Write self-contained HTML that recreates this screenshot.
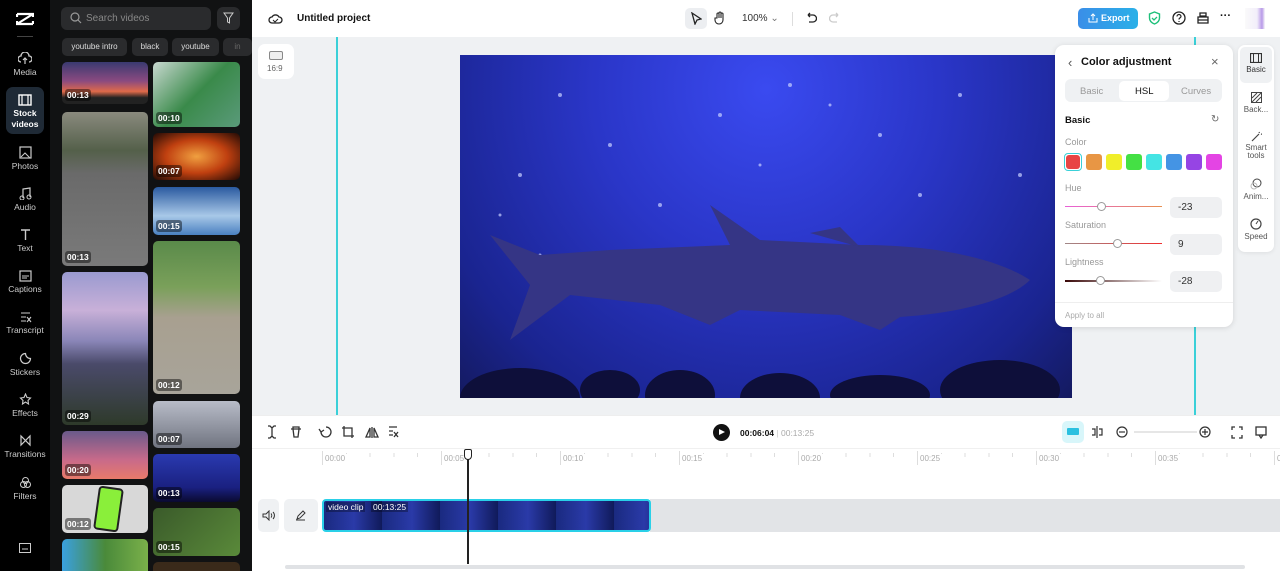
<!DOCTYPE html>
<html><head><meta charset="utf-8"><style>
*{box-sizing:border-box;margin:0;padding:0}
html{width:1280px;height:571px;overflow:hidden}
body{width:1280px;height:571px;overflow:hidden;font-family:"Liberation Sans",sans-serif;background:#fff;position:relative;font-size:12px;color:#111}
.a{position:absolute}
.nav{left:0;top:0;width:50px;height:571px;background:#000}
.ni{position:absolute;left:0;width:50px;text-align:center;color:#ccc;font-size:8.5px}
.ni svg{display:block;margin:0 auto 2px}
.panel{left:50px;top:0;width:202px;height:571px;background:#111213}
.th{position:absolute;border-radius:5px;overflow:hidden}
.th span{position:absolute;left:3px;bottom:3px;background:rgba(0,0,0,.45);color:#fff;font-size:8.5px;font-weight:bold;padding:1px 2px;border-radius:3px}
.chip{position:absolute;top:38px;height:18px;background:#2a2b2d;border-radius:5px;color:#ddd;font-size:8px;line-height:18px;text-align:center}
.lbl{color:#999;font-size:9px}
.inp{position:absolute;left:1170px;width:52px;height:21px;background:#eff0f2;border-radius:5px;font-size:10px;line-height:21px;padding-left:8px;color:#333}
.tick{position:absolute;top:454px;font-size:8px;color:#aaa;background:#fff;padding:0 2px}
.tl{position:absolute;top:451px;width:1px;height:14px;background:#ddd}
</style></head><body>
<div class="a nav">
<svg class="a" style="left:16px;top:12px" width="18" height="14" viewBox="0 0 18 14"><path d="M1 2h16L1 12h16" stroke="#fff" stroke-width="2.2" fill="none"/><path d="M1 2v3M17 2v3M1 12V9M17 12V9" stroke="#fff" stroke-width="2.2"/></svg>
<div class="a" style="left:17px;top:36px;width:16px;height:1px;background:#444"></div>
<div class="ni" style="top:52px"><svg width="14" height="13"><path d="M3 10a3 3 0 010-6 4 4 0 018 0 3 3 0 010 6" stroke="#ccc" fill="none" stroke-width="1.3"/><path d="M7 6v6M5 8l2-2 2 2" stroke="#ccc" fill="none" stroke-width="1.2"/></svg>Media</div>
<div class="a" style="left:6px;top:87px;width:38px;height:47px;background:#1f2a36;border-radius:7px"></div>
<div class="ni" style="top:94px;color:#fff;font-weight:bold;line-height:11px"><svg width="14" height="12"><rect x="1" y="1" width="12" height="10" stroke="#fff" fill="none" stroke-width="1.4"/><path d="M4 1v10M10 1v10" stroke="#fff" stroke-width="1.2"/></svg>Stock<br>videos</div>
<div class="ni" style="top:146px"><svg width="13" height="13"><rect x="1" y="1" width="11" height="11" stroke="#ccc" fill="none" stroke-width="1.2"/><path d="M2 11l4-4 5 5" stroke="#ccc" fill="none"/></svg>Photos</div>
<div class="ni" style="top:187px"><svg width="13" height="13"><path d="M4 11V2l7-1v9" stroke="#ccc" fill="none" stroke-width="1.2"/><circle cx="3" cy="11" r="2" stroke="#ccc" fill="none"/><circle cx="10" cy="10" r="2" stroke="#ccc" fill="none"/></svg>Audio</div>
<div class="ni" style="top:228px"><svg width="13" height="13"><path d="M2 2h9M6.5 2v10" stroke="#ccc" stroke-width="1.4"/></svg>Text</div>
<div class="ni" style="top:270px"><svg width="13" height="12"><rect x="1" y="1" width="11" height="10" stroke="#ccc" fill="none" stroke-width="1.2"/><path d="M3 6h7M3 8h5" stroke="#ccc"/></svg>Captions</div>
<div class="ni" style="top:311px"><svg width="13" height="12"><path d="M2 2h9M2 6h5M2 10h5M8 6l4 5M12 6l-4 5" stroke="#ccc" stroke-width="1.1"/></svg>Transcript</div>
<div class="ni" style="top:352px"><svg width="13" height="13"><path d="M6.5 1.5a5 5 0 105 5 5 5 0 01-5-5z" stroke="#ccc" fill="none" stroke-width="1.2"/></svg>Stickers</div>
<div class="ni" style="top:393px"><svg width="13" height="13"><path d="M6.5 1l1.5 3.5 3.5.5-2.5 2.5.5 3.5-3-2-3 2 .5-3.5L1.5 5 5 4.5z" stroke="#ccc" fill="none" stroke-width="1.1"/></svg>Effects</div>
<div class="ni" style="top:434px"><svg width="13" height="13"><path d="M2 2v9l9-9v9z" stroke="#ccc" fill="none" stroke-width="1.2"/></svg>Transitions</div>
<div class="ni" style="top:476px"><svg width="13" height="13"><circle cx="6.5" cy="4.5" r="3" stroke="#ccc" fill="none"/><circle cx="4.5" cy="8.5" r="3" stroke="#ccc" fill="none"/><circle cx="8.5" cy="8.5" r="3" stroke="#ccc" fill="none"/></svg>Filters</div>
<svg class="a" style="left:19px;top:543px" width="12" height="10"><rect x=".5" y=".5" width="11" height="9" stroke="#ccc" fill="none"/><path d="M3 6h6" stroke="#ccc"/></svg>
</div>
<div class="a panel">
<div class="a" style="left:11px;top:7px;width:150px;height:23px;background:#2a2b2d;border-radius:6px"></div>
<svg class="a" style="left:20px;top:12px" width="12" height="12"><circle cx="5" cy="5" r="4" stroke="#999" fill="none" stroke-width="1.2"/><path d="M8 8l3 3" stroke="#999" stroke-width="1.2"/></svg>
<div class="a" style="left:36px;top:13px;color:#888;font-size:10px">Search videos</div>
<div class="a" style="left:167px;top:7px;width:23px;height:23px;background:#2a2b2d;border-radius:6px"></div>
<svg class="a" style="left:173px;top:12px" width="11" height="12"><path d="M1 1h9L6.5 6v5L4.5 10V6z" stroke="#ccc" fill="none"/></svg>
<div class="chip" style="left:12px;width:65px">youtube intro</div>
<div class="chip" style="left:82px;width:36px">black</div>
<div class="chip" style="left:122px;width:47px">youtube</div>
<div class="chip" style="left:173px;width:29px;color:#666">in</div>
<div class="th" style="left:12px;top:62px;width:86px;height:42px;background:linear-gradient(#3a3a70,#8a4a80 45%,#e06a4a 70%,#222 85%)"><span>00:13</span></div>
<div class="th" style="left:12px;top:112px;width:86px;height:154px;background:linear-gradient(#8a8a7e,#54604a 25%,#6a6a6a 40%,#7a7a7a)"><span>00:13</span></div>
<div class="th" style="left:12px;top:272px;width:86px;height:153px;background:linear-gradient(#9a9ad0,#c8b0d8 25%,#8a86b8 45%,#4a4a6a 60%,#2e3a2a)"><span>00:29</span></div>
<div class="th" style="left:12px;top:431px;width:86px;height:48px;background:linear-gradient(#6a5a8a,#c86a8a 60%,#e87a6a)"><span>00:20</span></div>
<div class="th" style="left:12px;top:485px;width:86px;height:48px;background:#d8d8d8"><div class="a" style="left:34px;top:2px;width:25px;height:44px;background:#8aef3a;border:2px solid #222;border-radius:4px;transform:rotate(8deg)"></div><span>00:12</span></div>
<div class="th" style="left:12px;top:539px;width:86px;height:40px;background:linear-gradient(90deg,#3aa0e0,#4a8a3a,#7ab04a)"></div>
<div class="th" style="left:103px;top:62px;width:87px;height:65px;background:linear-gradient(135deg,#c8d8d0,#3a8a4a 50%,#5a9a7a)"><span>00:10</span></div>
<div class="th" style="left:103px;top:133px;width:87px;height:47px;background:radial-gradient(#f0a040,#c04010 50%,#200a05)"><span>00:07</span></div>
<div class="th" style="left:103px;top:187px;width:87px;height:48px;background:linear-gradient(#2a5aa0,#a8c8e8 60%,#4a80c0)"><span>00:15</span></div>
<div class="th" style="left:103px;top:241px;width:87px;height:153px;background:linear-gradient(#5a8a4a,#7aa05a 30%,#a8a090 50%,#a8a49a)"><span>00:12</span></div>
<div class="th" style="left:103px;top:401px;width:87px;height:47px;background:linear-gradient(#b8bcc8,#707480)"><span>00:07</span></div>
<div class="th" style="left:103px;top:454px;width:87px;height:48px;background:linear-gradient(#2a3ab0,#1a2080 70%,#0a0a30)"><span>00:13</span></div>
<div class="th" style="left:103px;top:508px;width:87px;height:48px;background:linear-gradient(135deg,#3a5a2a,#5a8a3a)"><span>00:15</span></div>
<div class="th" style="left:103px;top:562px;width:87px;height:20px;background:#3a2a1a"></div>
</div>
<div class="a" style="left:252px;top:278px;width:6px;height:34px;background:#2a2b2d;border-radius:0 4px 4px 0"></div>
<!-- topbar -->
<svg class="a" style="left:268px;top:11px" width="15" height="14"><path d="M4 12a3 3 0 010-6 4 4 0 017 0 3 3 0 010 6z" stroke="#222" fill="none" stroke-width="1.3"/><path d="M5 9l2 2 3-3" stroke="#222" fill="none"/></svg>
<div class="a" style="left:297px;top:13px;font-size:10px;font-weight:bold">Untitled project</div>
<div class="a" style="left:685px;top:8px;width:22px;height:21px;background:#eceef1;border-radius:5px"></div>
<svg class="a" style="left:690px;top:12px" width="12" height="13"><path d="M2 1l9 6-4 1-2 4z" stroke="#222" fill="none" stroke-width="1.3"/></svg>
<svg class="a" style="left:714px;top:11px" width="12" height="14"><path d="M3 7V3a1 1 0 012 0v4-5a1 1 0 012 0v5-4a1 1 0 012 0v6a4 4 0 01-8 0V7z" stroke="#222" fill="none" stroke-width="1.1"/></svg>
<div class="a" style="left:742px;top:13px;font-size:10px;color:#333">100% <span style="color:#777">⌄</span></div>
<div class="a" style="left:792px;top:12px;width:1px;height:14px;background:#ddd"></div>
<svg class="a" style="left:805px;top:12px" width="12" height="12"><path d="M3 3h5a3 3 0 010 7H4M3 3l2-2M3 3l2 2" stroke="#222" fill="none" stroke-width="1.3"/></svg>
<svg class="a" style="left:829px;top:12px" width="12" height="12"><path d="M9 3H4a3 3 0 000 7h4M9 3L7 1M9 3L7 5" stroke="#ccc" fill="none" stroke-width="1.3"/></svg>
<div class="a" style="left:1078px;top:8px;width:60px;height:21px;background:linear-gradient(90deg,#3a8ee8,#2ab0e8);border-radius:5px;color:#fff;font-size:9px;font-weight:bold;line-height:21px;padding-left:23px">Export</div>
<svg class="a" style="left:1088px;top:13px" width="10" height="10"><path d="M5 7V1M3 3l2-2 2 2M1 5v4h8V5" stroke="#fff" fill="none"/></svg>
<svg class="a" style="left:1148px;top:11px" width="13" height="14"><path d="M6.5 1l5 2v4c0 3-2.5 5-5 6-2.5-1-5-3-5-6V3z" stroke="#1ec07a" fill="none" stroke-width="1.4"/><path d="M4 7l2 2 3-3" stroke="#1ec07a" fill="none" stroke-width="1.3"/></svg>
<svg class="a" style="left:1172px;top:11px" width="14" height="14"><circle cx="7" cy="7" r="6" stroke="#222" fill="none" stroke-width="1.3"/><path d="M5 5.5a2 2 0 114 0c0 1.3-2 1.3-2 3M7 10v1" stroke="#222" fill="none" stroke-width="1.2"/></svg>
<svg class="a" style="left:1197px;top:12px" width="12" height="12"><path d="M3 1h6v3H3zM1 5h10v6H1zM1 8h10" stroke="#222" fill="none" stroke-width="1.3"/></svg>
<div class="a" style="left:1220px;top:10px;font-size:11px;font-weight:bold">···</div>
<div class="a" style="left:1245px;top:8px;width:20px;height:21px;background:linear-gradient(90deg,#fafafa,#f2eefa 60%,#b89ae8 85%,#fafafa)"></div>
<!-- canvas -->
<div class="a" style="left:252px;top:37px;width:1028px;height:378px;background:#eff1f3"></div>
<div class="a" style="left:258px;top:44px;width:36px;height:35px;background:#fff;border-radius:7px"></div>
<div class="a" style="left:269px;top:51px;width:14px;height:9px;border:1.2px solid #888;border-radius:2px;background:#eee"></div>
<div class="a" style="left:267px;top:64px;font-size:8px;color:#666">16:9</div>
<div class="a" style="left:336px;top:37px;width:2px;height:378px;background:#3ad0d8"></div>
<div class="a" style="left:1194px;top:37px;width:2px;height:378px;background:#3ad0d8"></div>
<div class="a" style="left:460px;top:55px;width:612px;height:343px;background:radial-gradient(ellipse at 50% 10%,#3a4af0,#2a36c8 40%,#1a2490 80%,#141a60);overflow:hidden">
<svg width="612" height="343"><g fill="#c8d0ff" opacity=".7"><circle cx="100" cy="40" r="2"/><circle cx="260" cy="60" r="2"/><circle cx="330" cy="30" r="2"/><circle cx="420" cy="80" r="2"/><circle cx="60" cy="120" r="2"/><circle cx="200" cy="150" r="2"/><circle cx="500" cy="40" r="2"/><circle cx="560" cy="120" r="2"/><circle cx="150" cy="90" r="2"/><circle cx="460" cy="140" r="2"/><circle cx="40" cy="160" r="1.5"/><circle cx="80" cy="200" r="1.5"/><circle cx="300" cy="110" r="1.5"/><circle cx="370" cy="50" r="1.5"/></g>
<path d="M570 225 C540 205 480 190 400 190 L300 185 L250 150 L270 190 L150 195 L80 200 L30 180 L70 230 L50 285 L110 240 L200 250 L250 270 L280 255 L380 260 L420 275 L440 262 C500 258 550 245 570 225 Z" fill="#353585"/>
<path d="M350 178 L380 172 L400 192 Z" fill="#353585"/>
<g fill="#0e0f3a"><ellipse cx="60" cy="343" rx="60" ry="30"/><ellipse cx="150" cy="335" rx="30" ry="20"/><ellipse cx="220" cy="340" rx="35" ry="25"/><ellipse cx="320" cy="343" rx="40" ry="25"/><ellipse cx="420" cy="340" rx="50" ry="20"/><ellipse cx="540" cy="335" rx="60" ry="30"/></g></svg></div>
<!-- color panel -->
<div class="a" style="left:1055px;top:45px;width:178px;height:282px;background:#fff;border-radius:9px;box-shadow:0 1px 6px rgba(0,0,0,.12)"></div>
<div class="a" style="left:1068px;top:55px;font-size:13px;color:#555">‹</div>
<div class="a" style="left:1081px;top:56px;font-size:11px;font-weight:bold">Color adjustment</div>
<div class="a" style="left:1211px;top:54px;font-size:13px;color:#666">×</div>
<div class="a" style="left:1065px;top:79px;width:157px;height:23px;background:#eff1f3;border-radius:6px"></div>
<div class="a" style="left:1119px;top:81px;width:50px;height:20px;background:#fff;border-radius:5px"></div>
<div class="a" style="left:1080px;top:86px;font-size:9.5px;color:#999">Basic</div>
<div class="a" style="left:1135px;top:86px;font-size:9.5px;color:#111">HSL</div>
<div class="a" style="left:1181px;top:86px;font-size:9.5px;color:#999">Curves</div>
<div class="a" style="left:1065px;top:115px;font-size:9.5px;font-weight:bold">Basic</div>
<div class="a" style="left:1211px;top:114px;font-size:10px;color:#666">↻</div>
<div class="a lbl" style="left:1065px;top:137px">Color</div>
<div class="a" style="left:1064px;top:153px;width:18px;height:18px;border:1.5px solid #3ad0d8;border-radius:4px"></div>
<div class="a" style="left:1066px;top:155px;width:14px;height:14px;background:#e84444;border-radius:3px"></div>
<div class="a" style="left:1086px;top:154px;width:16px;height:16px;background:#e89644;border-radius:3px"></div>
<div class="a" style="left:1106px;top:154px;width:16px;height:16px;background:#f0ee2a;border-radius:3px"></div>
<div class="a" style="left:1126px;top:154px;width:16px;height:16px;background:#44e044;border-radius:3px"></div>
<div class="a" style="left:1146px;top:154px;width:16px;height:16px;background:#44e4e4;border-radius:3px"></div>
<div class="a" style="left:1166px;top:154px;width:16px;height:16px;background:#4494e4;border-radius:3px"></div>
<div class="a" style="left:1186px;top:154px;width:16px;height:16px;background:#9644e4;border-radius:3px"></div>
<div class="a" style="left:1206px;top:154px;width:16px;height:16px;background:#e444e4;border-radius:3px"></div>
<div class="a lbl" style="left:1065px;top:183px">Hue</div>
<div class="a" style="left:1065px;top:206px;width:97px;height:1px;background:linear-gradient(90deg,#e860d8,#e89050)"></div>
<div class="a" style="left:1097px;top:202px;width:9px;height:9px;border-radius:50%;background:#fff;border:1px solid #999"></div>
<div class="inp" style="top:197px">-23</div>
<div class="a lbl" style="left:1065px;top:220px">Saturation</div>
<div class="a" style="left:1065px;top:243px;width:97px;height:1px;background:linear-gradient(90deg,#a08888,#f03030)"></div>
<div class="a" style="left:1113px;top:239px;width:9px;height:9px;border-radius:50%;background:#fff;border:1px solid #999"></div>
<div class="inp" style="top:234px">9</div>
<div class="a lbl" style="left:1065px;top:257px">Lightness</div>
<div class="a" style="left:1065px;top:280px;width:97px;height:2px;background:linear-gradient(90deg,#3a0808,#fff)"></div>
<div class="a" style="left:1096px;top:276px;width:9px;height:9px;border-radius:50%;background:#fff;border:1px solid #999"></div>
<div class="inp" style="top:271px">-28</div>
<div class="a" style="left:1055px;top:302px;width:178px;height:1px;background:#eee"></div>
<div class="a" style="left:1065px;top:311px;font-size:8px;color:#aaa">Apply to all</div>
<!-- right tabs -->
<div class="a" style="left:1238px;top:45px;width:36px;height:207px;background:#fff;border-radius:7px;box-shadow:0 1px 4px rgba(0,0,0,.08)"></div>
<div class="a" style="left:1240px;top:47px;width:32px;height:36px;background:#eff1f3;border-radius:5px"></div>
<div class="ni" style="left:1231px;top:53px;color:#333;font-size:8px"><svg width="12" height="10"><rect x=".5" y=".5" width="11" height="9" stroke="#333" fill="none" stroke-width="1.2"/><path d="M3.5 1v8M8.5 1v8" stroke="#333"/></svg>Basic</div>
<div class="ni" style="left:1231px;top:92px;color:#555;font-size:8px"><svg width="11" height="11"><rect x=".5" y=".5" width="10" height="10" stroke="#444" fill="none"/><path d="M1 10L10 1M1 6l5-5M5 10l5-5" stroke="#444"/></svg>Back...</div>
<div class="ni" style="left:1231px;top:131px;color:#555;font-size:8px;line-height:8px"><svg width="11" height="11"><path d="M1 10l7-7M8 1l.5 1M10 3l1 .3" stroke="#444" stroke-width="1.2"/></svg>Smart<br>tools</div>
<div class="ni" style="left:1231px;top:178px;color:#555;font-size:8px"><svg width="12" height="12"><circle cx="7" cy="5" r="4" stroke="#444" fill="none"/><circle cx="4" cy="8" r="3" stroke="#bbb" fill="none"/></svg>Anim...</div>
<div class="ni" style="left:1231px;top:218px;color:#555;font-size:8px"><svg width="12" height="12"><circle cx="6" cy="6" r="5" stroke="#444" fill="none" stroke-width="1.2"/><path d="M6 6l2-3" stroke="#444"/></svg>Speed</div>
<!-- timeline -->
<div class="a" style="left:252px;top:415px;width:1028px;height:1px;background:#eee"></div>
<svg class="a" style="left:266px;top:425px" width="136" height="14">
<g stroke="#333" fill="none" stroke-width="1.3"><path d="M2 1h2l2 2 2-2h2M6 3v8M2 13h2l2-2 2 2h2"/>
<path d="M25 4h10M27 4V2h6v2M27 4l1 8h4l1-8"/>
<path d="M60 2a5 5 0 11-5 5"/><path d="M53 4l2 3 3-2"/>
<path d="M78 1v10h10M76 3h10v10"/>
<path d="M106 2v11M104 12l-4 0 4-9zM108 12h4l-4-9z"/>
<path d="M123 2h8M123 6h4M123 10h4M128 7l4 5M132 7l-4 5"/></g></svg>
<div class="a" style="left:713px;top:424px;width:17px;height:17px;border-radius:50%;background:#111"></div>
<div class="a" style="left:719px;top:429px;width:0;height:0;border-left:6px solid #fff;border-top:3.5px solid transparent;border-bottom:3.5px solid transparent"></div>
<div class="a" style="left:740px;top:428px;font-size:8.5px;font-weight:bold">00:06:04 <span style="color:#ccc;font-weight:normal">|</span> <span style="color:#aaa;font-weight:normal">00:13:25</span></div>
<div class="a" style="left:1062px;top:421px;width:22px;height:22px;background:#d8f6fa;border-radius:5px"></div>
<div class="a" style="left:1067px;top:428px;width:12px;height:7px;background:#2ac0e0;border-radius:1px"></div>
<svg class="a" style="left:1090px;top:425px" width="150" height="14"><g stroke="#333" fill="none" stroke-width="1.2"><path d="M7 1v12M2 4h3v6H2M9 4h3v6H9"/><circle cx="32" cy="7" r="5"/><path d="M29 7h6"/><circle cx="115" cy="7" r="5"/><path d="M112 7h6M115 4v6"/></g><path d="M44 7h63" stroke="#ccc"/></svg>
<svg class="a" style="left:1231px;top:426px" width="36" height="13"><g stroke="#333" fill="none" stroke-width="1.3"><path d="M1 4V1h3M8 1h3v3M11 9v3H8M4 12H1V9"/><rect x="25" y="1" width="10" height="8"/><path d="M28 9l2 3 2-3"/></g></svg>
<div class="a" style="left:252px;top:448px;width:1028px;height:1px;background:#f0f0f0"></div>
<div class="a" style="left:322px;top:453px;width:958px;height:4px;background:repeating-linear-gradient(90deg,#ddd 0 1px,transparent 1px 23.8px)"></div>
<div class="tl" style="left:322px"></div><div class="tl" style="left:441px"></div><div class="tl" style="left:560px"></div><div class="tl" style="left:679px"></div><div class="tl" style="left:798px"></div><div class="tl" style="left:917px"></div><div class="tl" style="left:1036px"></div><div class="tl" style="left:1155px"></div><div class="tl" style="left:1274px"></div>
<div class="tick" style="left:323px">00:00</div><div class="tick" style="left:442px">00:05</div><div class="tick" style="left:561px">00:10</div><div class="tick" style="left:680px">00:15</div><div class="tick" style="left:799px">00:20</div><div class="tick" style="left:918px">00:25</div><div class="tick" style="left:1037px">00:30</div><div class="tick" style="left:1156px">00:35</div><div class="tick" style="left:1275px">0</div>
<div class="a" style="left:258px;top:499px;width:21px;height:33px;background:#eff1f3;border-radius:5px"></div>
<svg class="a" style="left:262px;top:510px" width="13" height="11"><path d="M1 4h3l3-3v9L4 7H1z" stroke="#333" fill="none"/><path d="M9 3.5a3 3 0 010 4M11 2a5 5 0 010 7" stroke="#333" fill="none"/></svg>
<div class="a" style="left:284px;top:499px;width:34px;height:33px;background:#eff1f3;border-radius:5px"></div>
<svg class="a" style="left:295px;top:510px" width="11" height="11"><path d="M2 9l1-3 5-5 2 2-5 5zM1 10h9" stroke="#333" fill="none"/></svg>
<div class="a" style="left:650px;top:499px;width:630px;height:33px;background:#e2e4e7"></div>
<div class="a" style="left:322px;top:499px;width:329px;height:33px;border:2px solid #2ad0e8;border-radius:4px;background:repeating-linear-gradient(90deg,#1a2a80 0,#2a3aa8 30px,#101a5a 58px);overflow:hidden">
<div class="a" style="left:2px;top:1px;font-size:8.5px;color:#fff;background:rgba(0,0,0,.3);padding:0 2px">video clip</div>
<div class="a" style="left:47px;top:1px;font-size:8.5px;color:#fff;background:rgba(0,0,0,.3);padding:0 2px">00:13:25</div></div>
<div class="a" style="left:467px;top:452px;width:2px;height:112px;background:#222"></div>
<div class="a" style="left:464px;top:449px;width:8px;height:11px;border:1.5px solid #222;border-radius:2px 2px 4px 4px;background:#fff"></div>
<div class="a" style="left:285px;top:565px;width:960px;height:4px;background:#e0e2e5;border-radius:2px"></div>
</body></html>
